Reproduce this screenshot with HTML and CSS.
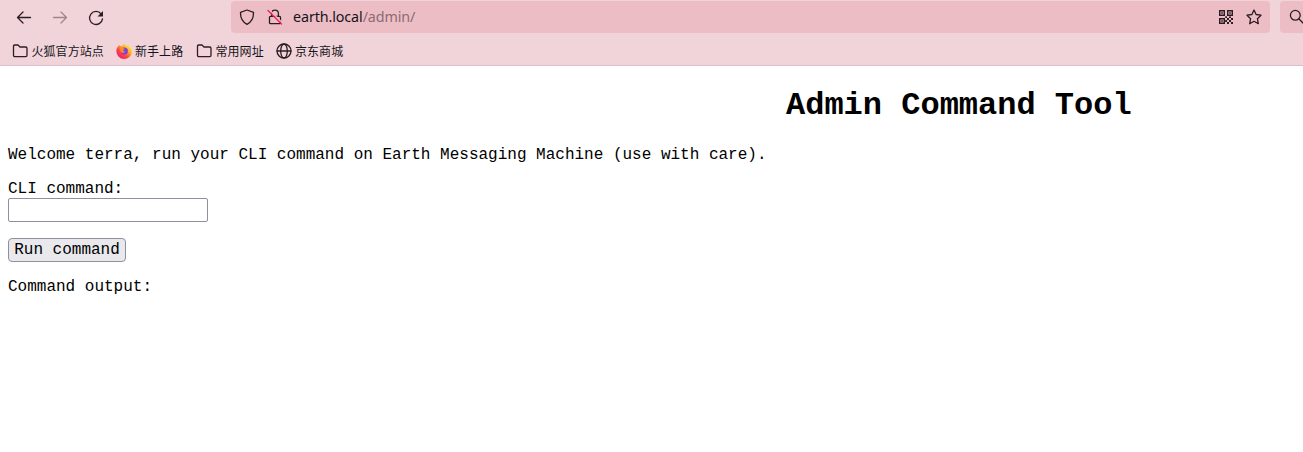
FILE: index.html
```html
<!DOCTYPE html>
<html lang="zh-CN">
<head>
<meta charset="utf-8">
<title>Admin Command Tool</title>
<link rel="stylesheet" href="styles.css">
</head>
<body>
<header class="chrome">
  <div class="toolbar">
    <nav class="nav-buttons">
      <svg class="icon" viewBox="0 0 16 16"><path d="M14.500 7.500H1.500M7 2L1.500 7.500l5.500 5.500"/></svg>
      <svg class="icon disabled" viewBox="0 0 16 16"><path d="M1.500 7.500h13M9 2l5.500 5.500-5.500 5.500"/></svg>
      <svg class="icon" viewBox="0 0 16 16"><path d="M13.200 4A6.500 6.500 0 1 0 14.500 8.800"/><path class="solid" d="M15 1v5.500H9.500z"/></svg>
    </nav>
    <div class="urlbar">
      <svg class="icon" viewBox="0 0 16 16"><path d="M8 1L14.500 3.300C14.700 9 12.500 13 8 15.300 3.500 13 1.300 9 1.500 3.300z"/></svg>
      <svg class="icon lock" viewBox="0 0 16 16"><path d="M4.600 7V4.500a3.400 3.400 0 0 1 6.800 0V7M3.500 7.300h9q1 0 1 1v5.400q0 1-1 1h-9q-1 0-1-1V8.300q0-1 1-1z"/><path class="gap" d="M2 .5L16 14.500"/><path class="slash" d="M1 1.500L14.500 15"/></svg>
      <span class="url">earth.local<span class="path">/admin/</span></span>
      <svg class="icon qr" viewBox="0 0 14 14"><path d="M.7.700h4.600v4.600H.7zM8.700.700h4.600v4.600H8.700zM.7 8.700h4.600v4.600H.7z"/><path class="solid" d="M2.200 2.200h1.600v1.600H2.200zM10.200 2.200h1.600v1.600h-1.600zM2.200 10.200h1.600v1.600H2.200zM6.200 6.200H8V8H6.200zM8 8h2v2H8zM12 8h2v2h-2zM10 10h2v2h-2zM8 12h2v2H8zM12 12h2v2h-2zM6.200 10H8v2H6.200zM10 6.500h2V8h-2z"/></svg>
      <svg class="icon star" viewBox="0 0 16 16"><path d="M8 1l2.100 4.500 4.900.7-3.600 3.500.9 5L8 12.300l-4.300 2.400.9-5L1 6.200l4.900-.7z"/></svg>
    </div>
    <div class="searchbar">
      <svg class="icon glass" viewBox="0 0 14 16"><circle cx="6.300" cy="6.300" r="4.900"/><path d="M10 10l5 5"/></svg>
    </div>
  </div>
  <nav class="bookmarks">
    <a class="bookmark"><svg class="icon" viewBox="0 0 16 16"><path d="M2.800 2h3.200l2 2h5.700q1.300 0 1.300 1.300v7q0 1.300-1.300 1.300H2.800Q1.500 13.600 1.500 12.300V3.300Q1.500 2 2.800 2z"/></svg><span class="label wide">火狐官方站点</span></a>
    <a class="bookmark"><svg class="firefox" viewBox="0 0 16 16">
      <defs>
        <linearGradient id="flame" x1=".85" y1=".1" x2=".2" y2=".9"><stop offset="0" stop-color="#fff04a"/><stop offset=".35" stop-color="#ffae25"/><stop offset=".65" stop-color="#ff4b3b"/><stop offset="1" stop-color="#f0206f"/></linearGradient>
      </defs>
      <path fill="url(#flame)" d="M2 3.500L3 1.700l1 1.600 1.300-.3C6.500 2.800 7.500 2 8.800.2c.3 1.300 1 1.800 2 2.700L12 2c2.500 2 4 4.200 3.800 7A7.500 7.500 0 0 1 8.200 16 7.800 7.800 0 0 1 .3 8.300C.2 6.500.9 4.800 2 3.500z"/>
      <circle cx="8.400" cy="8" r="3.500" fill="#7842d8"/>
      <path fill="#ff8a2a" d="M3 5c1.500-1 3-.8 4.200.3l1.600.3c-.2 1-1.100 1.100-1.600 1.600.2 1.300 1.300 1.600 2.400 1.300-.8 1.300-3 1.700-4.400.7C4 8.200 4 6.500 4.300 5.800z"/>
    </svg><span class="label">新手上路</span></a>
    <a class="bookmark"><svg class="icon" viewBox="0 0 16 16"><path d="M2.800 2h3.200l2 2h5.700q1.300 0 1.300 1.300v7q0 1.300-1.300 1.300H2.800Q1.500 13.600 1.500 12.300V3.300Q1.500 2 2.800 2z"/></svg><span class="label">常用网址</span></a>
    <a class="bookmark last"><svg class="icon" viewBox="0 0 16 16"><circle cx="8" cy="8" r="7"/><ellipse cx="8" cy="8" rx="3.300" ry="7"/><path d="M1 8h14"/></svg><span class="label">京东商城</span></a>
  </nav>
</header>
<main class="page">
  <h1 class="title">Admin Command Tool</h1>
  <p class="welcome">Welcome terra, run your CLI command on Earth Messaging Machine (use with care).</p>
  <form class="command-form">
    <label class="field-label" for="cmd">CLI command:</label>
    <input class="field" id="cmd" type="text">
    <button class="run" type="button">Run command</button>
  </form>
  <p class="output">Command output:</p>
</main>
</body>
</html>
```
FILE: styles.css
```css
body {
  margin: 0;
  background: #fff;
}
.chrome {
  box-sizing: border-box;
  height: 66px;
  background: #f1d4da;
  border-bottom: 1px solid #dfbec5;
  color: #15141a;
}
.toolbar {
  display: flex;
  padding-top: 1px;
}
.nav-buttons {
  display: flex;
  flex: none;
  align-items: center;
  gap: 20px;
  width: 215px;
  padding: 1px 0 0 16px;
}
.icon {
  display: block;
  flex: none;
  width: 16px;
  height: 16px;
  fill: none;
  stroke: #2b1d23;
  stroke-width: 1.3;
  stroke-linecap: round;
  stroke-linejoin: round;
}
.solid {
  fill: #2b1d23;
  stroke: none;
}
.disabled {
  opacity: .42;
}
.urlbar {
  box-sizing: border-box;
  display: flex;
  flex: none;
  align-items: center;
  width: 1039px;
  height: 32px;
  padding: 0 8px;
  border-radius: 4px;
  background: #edbdc5;
}
.lock {
  margin-left: 12px;
}
.gap {
  stroke: #edbdc5;
}
.slash {
  stroke: #f01f50;
}
.url {
  flex: 1;
  margin-left: 10px;
  font: 14.3px/20px "Noto Sans", sans-serif;
  letter-spacing: -.1px;
}
.path {
  color: #8b6b73;
}
.qr {
  width: 14px;
  height: 14px;
  stroke-width: 1.4;
  stroke-linejoin: miter;
}
.star {
  margin-left: 13px;
}
.searchbar {
  display: flex;
  flex: 1;
  align-items: center;
  height: 32px;
  margin-left: 10px;
  padding-left: 9px;
  border-radius: 4px 0 0 4px;
  background: #edbdc5;
}
.glass {
  width: 14px;
  overflow: hidden;
}
.bookmarks {
  display: flex;
  gap: 12px;
  padding: 10px 0 0 12px;
}
.bookmark {
  display: flex;
  align-items: center;
  height: 16px;
  gap: 3.500px;
}
.bookmark.last {
  margin-left: -1px;
}
.firefox {
  width: 16px;
  height: 16px;
}
.label {
  width: 49px;
  font: 12px/16px "Noto Sans CJK SC", sans-serif;
  letter-spacing: .05px;
  white-space: nowrap;
}
.wide {
  width: 72px;
}
.page {
  padding: 0 8px;
  color: #000;
  font: 16px/18px "Courier New", "Liberation Mono", monospace;
}
.title {
  margin: 22px 0 0 778px;
  font-size: 32px;
  line-height: 36px;
  white-space: nowrap;
}
.welcome {
  margin: 22px 0 16px;
}
.command-form {
  display: flex;
  flex-direction: column;
  align-items: flex-start;
}
.field {
  box-sizing: border-box;
  width: 200px;
  height: 24px;
  margin: 0 0 16px;
  border: 1px solid #8f8f9d;
  border-radius: 2px;
  background: #fff;
}
.run {
  box-sizing: border-box;
  width: 118px;
  height: 24px;
  padding: 0;
  border: 1px solid #8f8f9d;
  border-radius: 4px;
  background: #e9e9ed;
  color: #000;
  font: 16px/20px "Courier New", "Liberation Mono", monospace;
}
.output {
  margin: 16px 0 0;
}
```
